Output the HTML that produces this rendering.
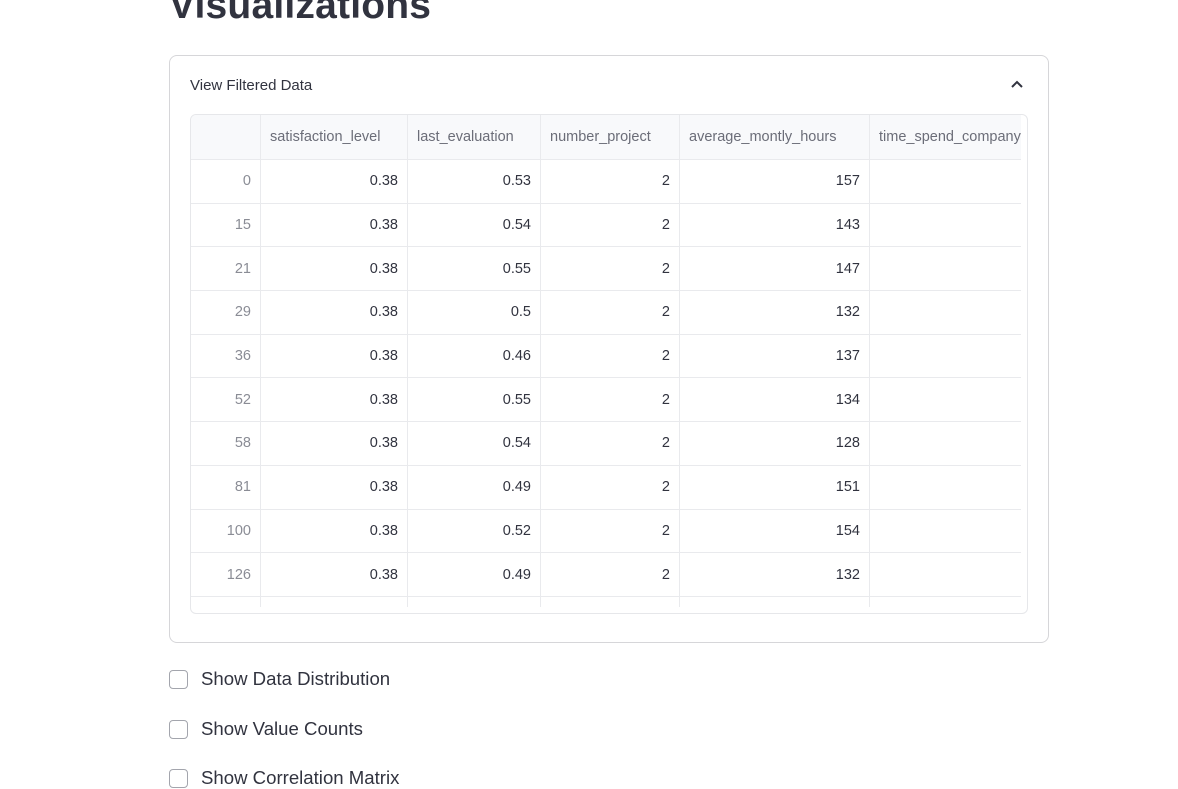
<!DOCTYPE html>
<html><head><style>
body{margin:0;width:1178px;height:776px;overflow:hidden;background:#fff;font-family:"Liberation Sans",sans-serif;color:#31333f;position:relative}
h1{position:absolute;left:169px;top:-16px;margin:0;font-size:39px;font-weight:bold;letter-spacing:0.2px}
.exp{position:absolute;left:169px;top:55px;width:880px;height:588px;border:1px solid #d6d6d9;border-radius:8px;box-sizing:border-box}
.exp .t{position:absolute;left:20px;top:21px;font-size:15px}
.chev{position:absolute;right:24px;top:23px}
.tbl{position:absolute;left:190px;top:114px;width:838px;height:500px;border:1px solid #e6e7ea;border-radius:6px;box-sizing:border-box;overflow:hidden}
.clip{position:absolute;left:0;top:0;width:830px;height:492px;overflow:hidden}
table{border-collapse:collapse;font-size:14.5px;position:absolute;left:-1px;top:-1px;table-layout:fixed;width:919px}
td,th{border:1px solid #e9eaed;padding:0 9px;text-align:right;height:42.7px;white-space:nowrap;overflow:hidden}
th{background:#f8f9fb;color:#6b6d78;font-weight:normal;text-align:left;height:44px}
td.i{color:#8a8c95;background:#fff}
.cb{position:absolute;left:169px;width:17px;height:17px;border:1px solid #a3a5ad;border-radius:4px}
.lb{position:absolute;left:201px;font-size:18.6px}
</style></head><body>
<h1>Visualizations</h1>
<div class="exp"><div class="t">View Filtered Data</div>
<svg class="chev" width="14" height="10" viewBox="0 0 14 10"><path d="M2 8 L7 3 L12 8" fill="none" stroke="#31333f" stroke-width="2"/></svg></div>
<div class="tbl"><div class="clip"><table>
<colgroup><col style="width:70px"><col style="width:147px"><col style="width:133px"><col style="width:139px"><col style="width:190px"><col style="width:240px"></colgroup>
<tr><th></th><th>satisfaction_level</th><th>last_evaluation</th><th>number_project</th><th>average_montly_hours</th><th>time_spend_company</th></tr>
<tr><td class="i">0</td><td>0.38</td><td>0.53</td><td>2</td><td>157</td><td></td></tr>
<tr><td class="i">15</td><td>0.38</td><td>0.54</td><td>2</td><td>143</td><td></td></tr>
<tr><td class="i">21</td><td>0.38</td><td>0.55</td><td>2</td><td>147</td><td></td></tr>
<tr><td class="i">29</td><td>0.38</td><td>0.5</td><td>2</td><td>132</td><td></td></tr>
<tr><td class="i">36</td><td>0.38</td><td>0.46</td><td>2</td><td>137</td><td></td></tr>
<tr><td class="i">52</td><td>0.38</td><td>0.55</td><td>2</td><td>134</td><td></td></tr>
<tr><td class="i">58</td><td>0.38</td><td>0.54</td><td>2</td><td>128</td><td></td></tr>
<tr><td class="i">81</td><td>0.38</td><td>0.49</td><td>2</td><td>151</td><td></td></tr>
<tr><td class="i">100</td><td>0.38</td><td>0.52</td><td>2</td><td>154</td><td></td></tr>
<tr><td class="i">126</td><td>0.38</td><td>0.49</td><td>2</td><td>132</td><td></td></tr>
<tr><td class="i"></td><td></td><td></td><td></td><td></td><td></td></tr>
</table></div></div>
<div class="cb" style="top:670px"></div><div class="lb" style="top:668px">Show Data Distribution</div>
<div class="cb" style="top:720px"></div><div class="lb" style="top:718px">Show Value Counts</div>
<div class="cb" style="top:769px"></div><div class="lb" style="top:767px">Show Correlation Matrix</div>
</body></html>
